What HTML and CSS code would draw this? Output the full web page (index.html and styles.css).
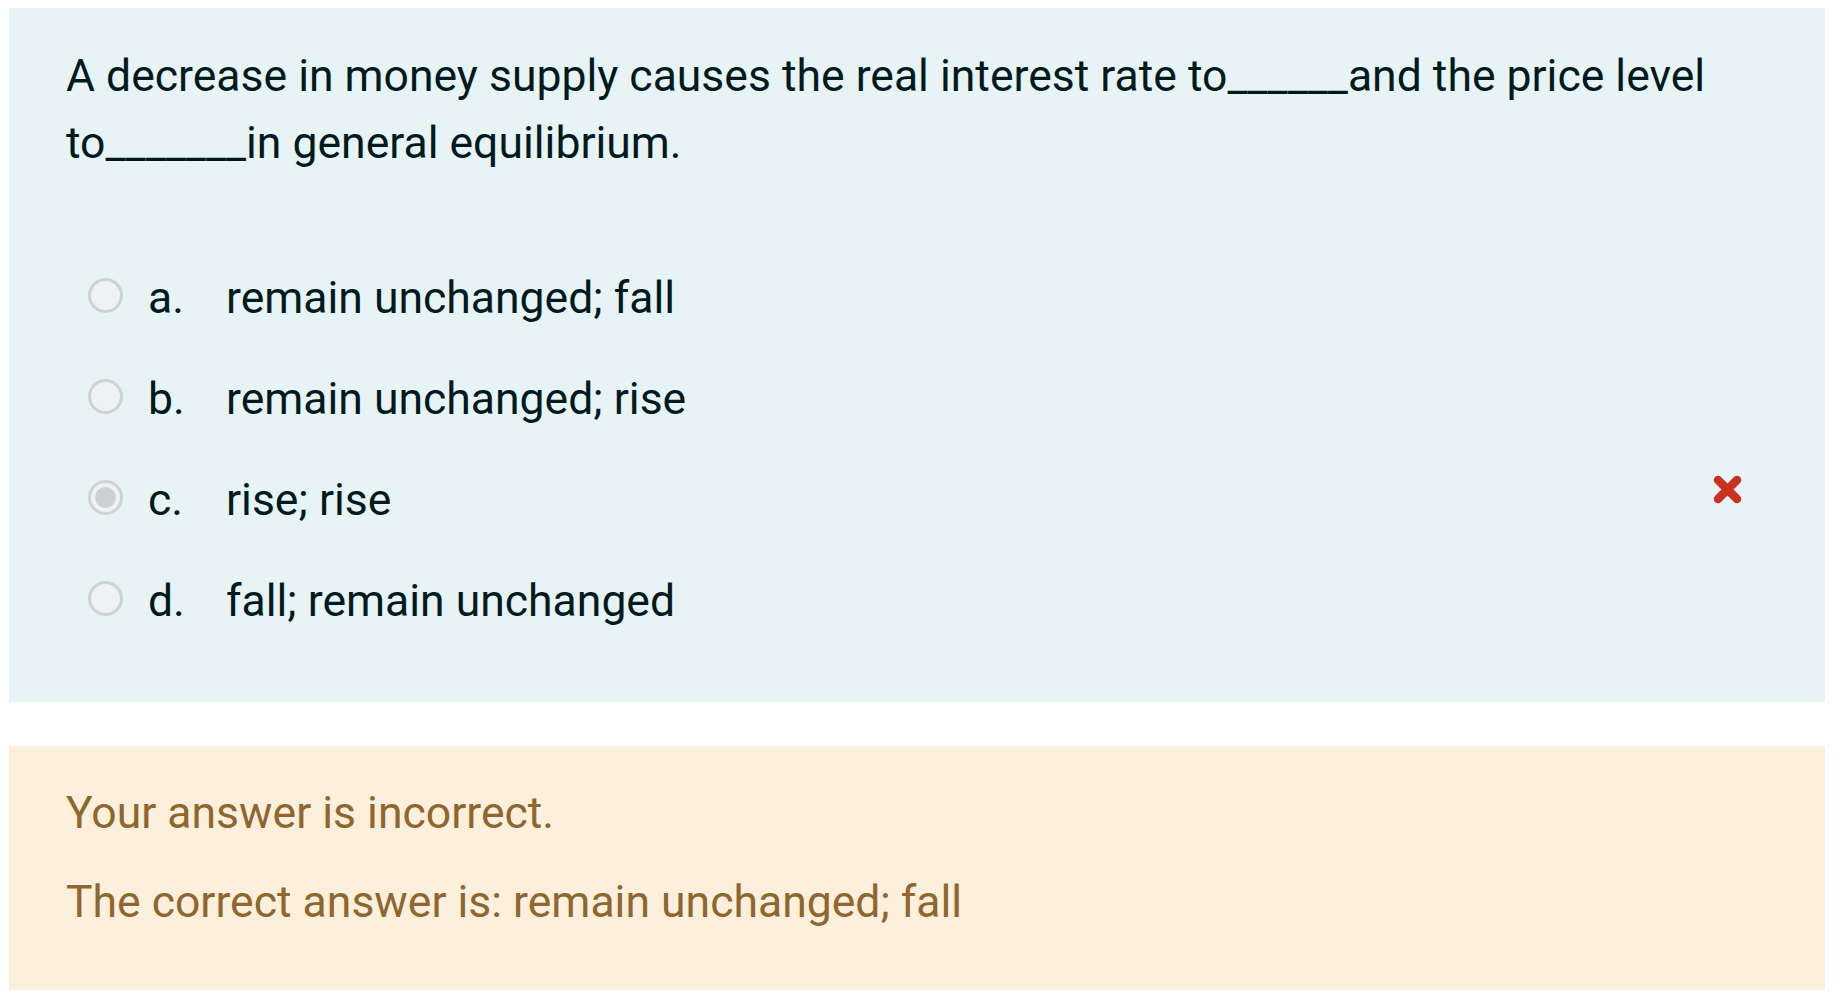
FILE: index.html
```html
<!DOCTYPE html>
<html lang="en">
<head>
<meta charset="utf-8">
<title>Question</title>
<link rel="stylesheet" href="styles.css">
</head>
<body>
<div class="page">
  <div class="formulation">
    <div class="qtext">A decrease in money supply causes the real interest rate to______and the price level to_______in general equilibrium.</div>
    <div class="answers">
      <div class="option">
        <span class="radio"></span>
        <span class="letter">a.</span>
        <span class="text">remain unchanged; fall</span>
      </div>
      <div class="option">
        <span class="radio"></span>
        <span class="letter">b.</span>
        <span class="text">remain unchanged; rise</span>
      </div>
      <div class="option">
        <span class="radio checked"></span>
        <span class="letter">c.</span>
        <span class="text">rise; rise</span>
        <svg class="wrong" viewBox="0 0 29 29" width="29" height="29" aria-label="Incorrect">
          <path d="M5 5 L24 24 M24 5 L5 24" stroke="#ca3120" stroke-width="8.5" stroke-linecap="round" fill="none"/>
        </svg>
      </div>
      <div class="option">
        <span class="radio"></span>
        <span class="letter">d.</span>
        <span class="text">fall; remain unchanged</span>
      </div>
    </div>
  </div>
  <div class="outcome">
    <div class="feedback">Your answer is incorrect.</div>
    <div class="rightanswer">The correct answer is: remain unchanged; fall</div>
  </div>
</div>
</body>
</html>
```

FILE: styles.css
```css
html, body {
  margin: 0;
  padding: 0;
  background: #ffffff;
}

body {
  font-family: Roboto, "Liberation Sans", Arial, sans-serif;
  font-size: 44.5px;
  line-height: 67px;
  color: #001a1e;
}

.page {
  padding: 8px 15px 0 9px;
}

.formulation {
  background: #e7f3f5;
  padding: 35px 57px 50px 57px;
}

.qtext {
  margin-bottom: 71px;
}

.answers {
  margin-left: 22px;
}

.option {
  display: flex;
  align-items: flex-start;
  padding: 17px 0;
  height: 67px;
  box-sizing: content-box;
}

.radio {
  flex: 0 0 auto;
  width: 35px;
  height: 35px;
  box-sizing: border-box;
  border: 3px solid #cfd1d2;
  border-radius: 50%;
  background: #eef2f3;
  margin-top: 13px;
  margin-right: 25px;
  position: relative;
}

.radio.checked::after {
  content: "";
  position: absolute;
  left: 4px;
  top: 4px;
  width: 21px;
  height: 21px;
  border-radius: 50%;
  background: #cdd0d2;
}

.letter {
  flex: 0 0 78px;
}

.text {
  flex: 0 1 auto;
}

.wrong {
  margin-left: auto;
  margin-right: 26px;
  margin-top: 8px;
}

.outcome {
  margin-top: 44px;
  background: #fcefdc;
  color: #8e662e;
  padding: 34px 57px 54px 57px;
}

.rightanswer {
  margin-top: 22px;
}
```
